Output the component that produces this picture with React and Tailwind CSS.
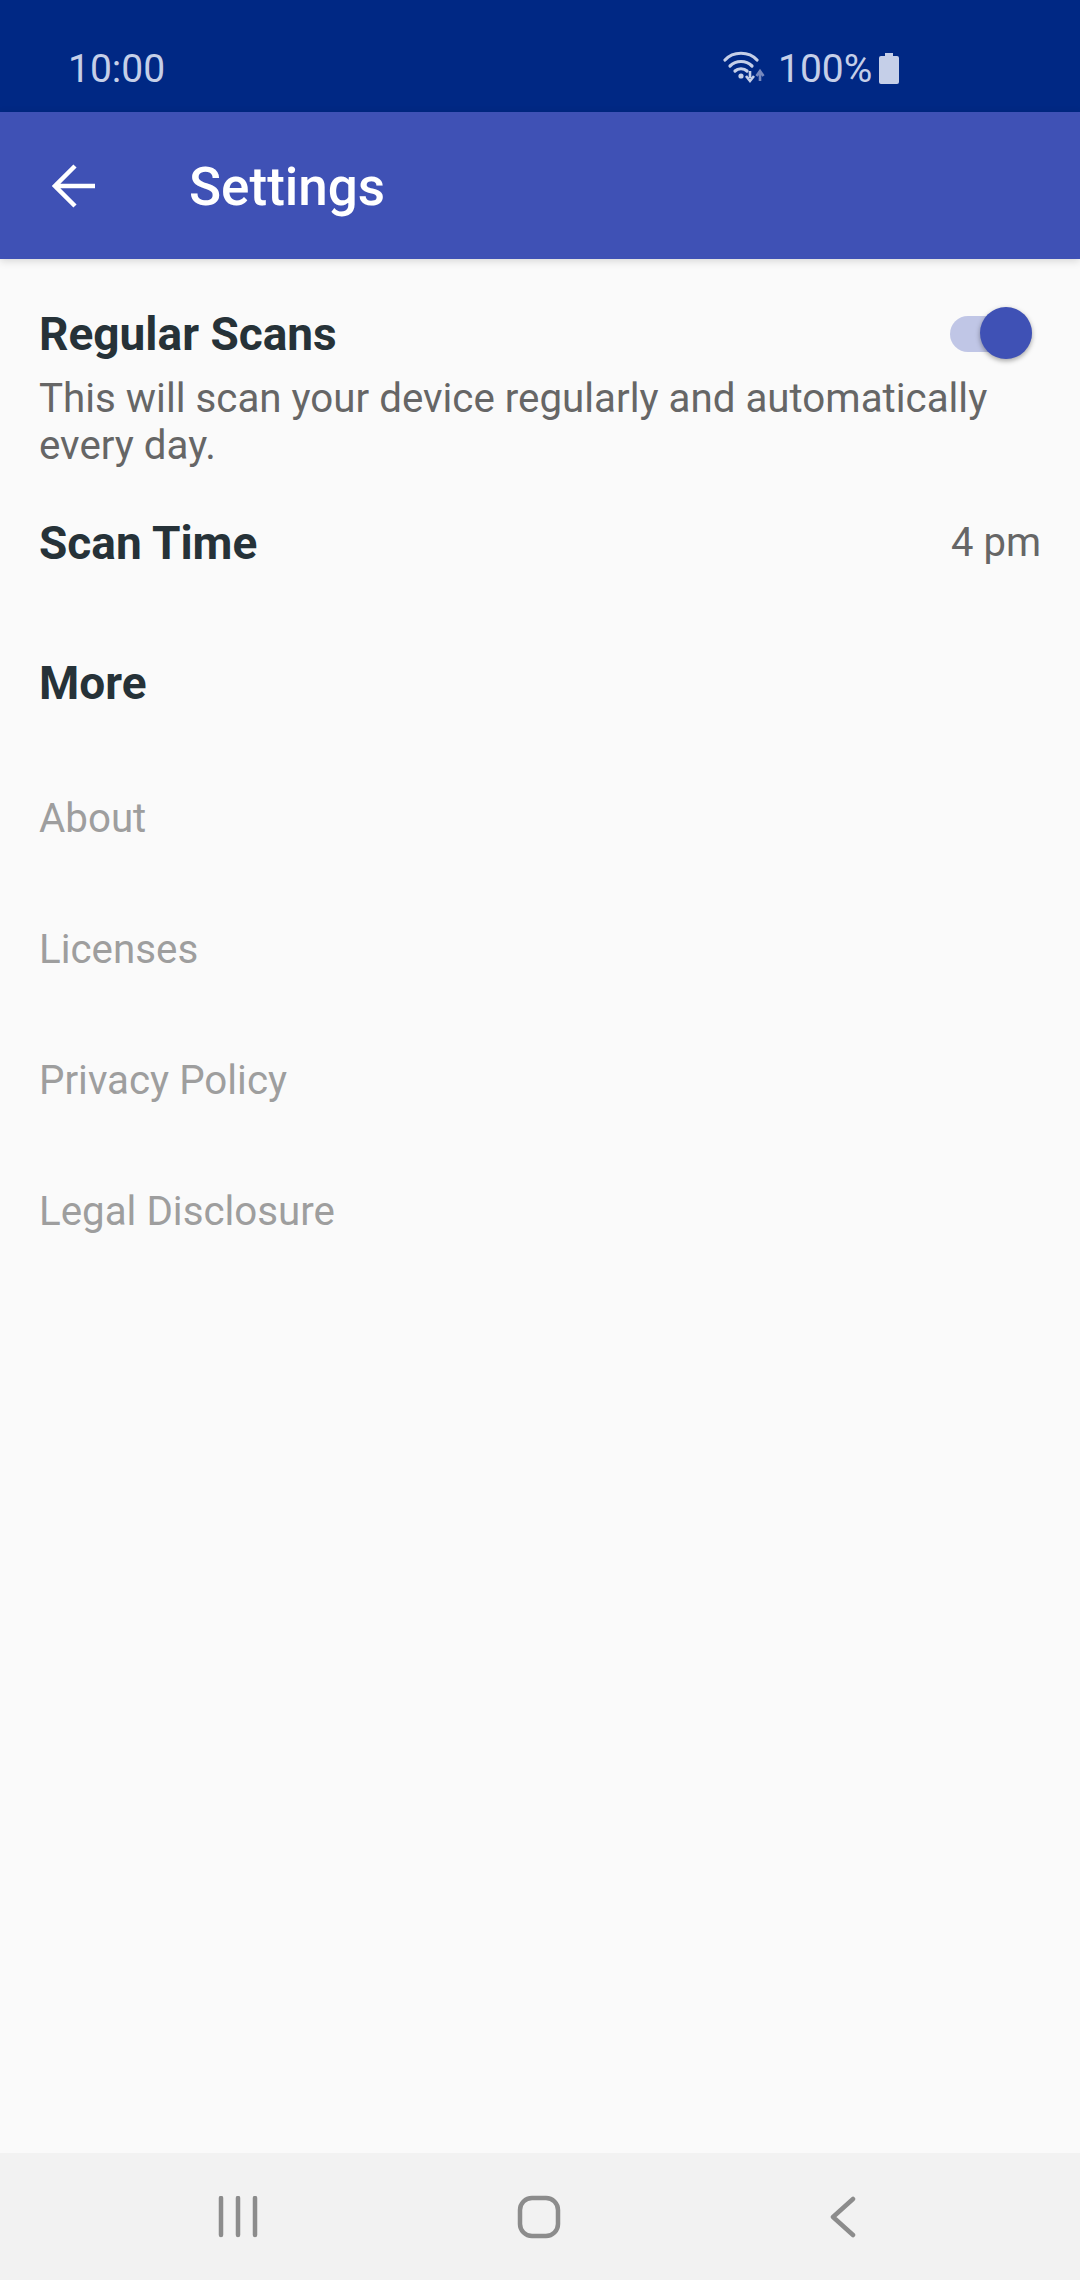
import React from "react";

const font = { fontFamily: "Roboto, sans-serif" };

function Wifi() {
  return (
    <svg width="42" height="36" viewBox="0 0 42 36" className="block">
      <g fill="none" stroke="#c5cfe8" strokeWidth="3.200" strokeLinecap="round">
        <path d="M2 9 C10 0 26 0 34 9" />
        <path d="M7 15 C13 9 23 9 29 15" />
        <path d="M12 20 C15 17 21 17 24 20" />
      </g>
      <circle cx="18" cy="25" r="2.6" fill="#c5cfe8" />
      <path d="M27 20 L27 27 M23 25 L27 30 L31 25" stroke="#c5cfe8" strokeWidth="2.6" fill="none" />
      <path d="M37 30 L37 22 M33.500 25 L37 20 L40.500 25" stroke="#7688be" strokeWidth="2.600" fill="none" />
    </svg>
  );
}

function Battery() {
  return (
    <svg width="22" height="32" viewBox="0 0 22 32" className="block">
      <path d="M7 0 H15 V3 H19 Q21 3 21 5 V29 Q21 31 19 31 H3 Q1 31 1 29 V5 Q1 3 3 3 H7 Z" fill="#c5cfe8" />
    </svg>
  );
}

function BackArrow() {
  return (
    <svg width="44" height="44" viewBox="0 0 44 44" className="block">
      <path d="M43 22 H3 M23 2 L3 22 L23 42" fill="none" stroke="#fff" strokeWidth="4.500" />
    </svg>
  );
}

function Link({ children }) {
  return <div className="h-[131px] flex items-center text-[40.3px] text-[#9e9e9e]">{children}</div>;
}

export default function App() {
  return (
    <div className="w-[1080px] h-[2280px] flex flex-col bg-[#fafafa] overflow-hidden" style={font}>
      <div className="h-[112px] shrink-0 bg-[#002884] flex items-center pl-[68px] pt-[26px] text-[39px] text-[#c5cfe8]">
        <span className="w-[655px]">10:00</span>
        <Wifi />
        <span className="ml-[13px]">100%</span>
        <span className="ml-[6px]"><Battery /></span>
      </div>
      <div className="h-[147px] shrink-0 bg-[#3f51b5] flex items-center pl-[52px] shadow-[0_2px_8px_rgba(0,0,0,0.15)] relative">
        <BackArrow />
        <span className="ml-[93px] pt-[4px] text-[53px] font-medium text-white">Settings</span>
      </div>
      <div className="flex-1 px-[39px]">
        <div className="flex items-center justify-between h-[74px] mt-[38px]">
          <span className="text-[46px] font-bold text-[#263238]">Regular Scans</span>
          <div className="relative w-[82px] h-[36px] mr-[9px] rounded-full bg-[#c0c6e6]">
            <div className="absolute right-0 top-[-9px] w-[52px] h-[52px] rounded-full bg-[#3f51b5] shadow-[0_2px_5px_rgba(0,0,0,0.35)]" />
          </div>
        </div>
        <p className="text-[40.3px] leading-[47px] text-[#666666] mt-[4px] w-[1002px]">
          This will scan your device regularly and automatically every day.
        </p>
        <div className="flex items-center justify-between h-[74px] mt-[37px]">
          <span className="text-[46px] font-bold text-[#263238]">Scan Time</span>
          <span className="text-[40px] text-[#666666]">4 pm</span>
        </div>
        <div className="mt-[66px] h-[74px] flex items-center text-[46px] font-bold text-[#263238]">More</div>
        <div className="mt-[34px]">
          <Link>About</Link>
          <Link>Licenses</Link>
          <Link>Privacy Policy</Link>
          <Link>Legal Disclosure</Link>
        </div>
      </div>
      <div className="h-[127px] shrink-0 bg-[#f2f2f2] flex items-center justify-between pl-[218px] pr-[224px]">
        <svg width="40" height="42" viewBox="0 0 40 42" className="block">
          <path d="M3 2 V39 M20 2 V39 M37 2 V39" stroke="#8c8c8c" strokeWidth="4.500" strokeLinecap="round" />
        </svg>
        <svg width="44" height="44" viewBox="0 0 44 44" className="block mr-[10px]">
          <rect x="3" y="3" width="38" height="38" rx="12" fill="none" stroke="#8c8c8c" strokeWidth="4.500" />
        </svg>
        <svg width="26" height="42" viewBox="0 0 26 42" className="block">
          <path d="M23 3 L3 21 L23 39" fill="none" stroke="#8c8c8c" strokeWidth="4.500" strokeLinecap="round" strokeLinejoin="round" />
        </svg>
      </div>
    </div>
  );
}
